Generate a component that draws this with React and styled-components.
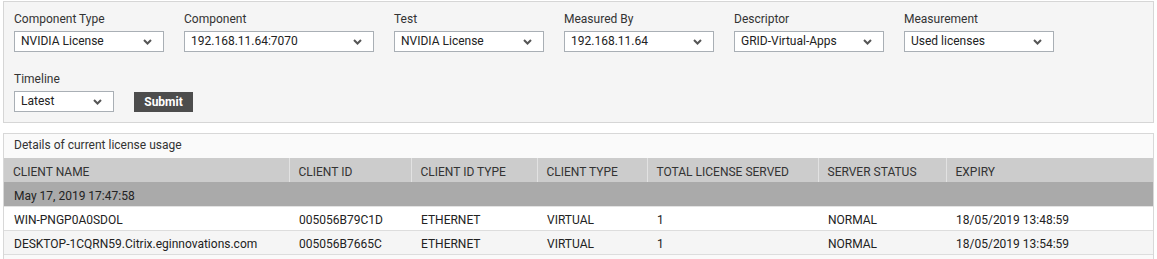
import React from "react";
import styled, { createGlobalStyle } from "styled-components";

const filters = [
  { label: "Component Type", value: "NVIDIA License", width: 150 },
  { label: "Component", value: "192.168.11.64:7070", width: 190 },
  { label: "Test", value: "NVIDIA License", width: 150 },
  { label: "Measured By", value: "192.168.11.64", width: 150 },
  { label: "Descriptor", value: "GRID-Virtual-Apps", width: 150 },
  { label: "Measurement", value: "Used licenses", width: 150 },
];

const columns = [
  { title: "Client Name", width: 285 },
  { title: "Client ID", width: 122 },
  { title: "Client ID Type", width: 126 },
  { title: "Client Type", width: 110 },
  { title: "Total License Served", width: 171 },
  { title: "Server Status", width: 128 },
  { title: "Expiry" },
];

const rows = [
  ["WIN-PNGP0A0SDOL", "005056B79C1D", "ETHERNET", "VIRTUAL", "1", "NORMAL", "18/05/2019 13:48:59"],
  ["DESKTOP-1CQRN59.Citrix.eginnovations.com", "005056B7665C", "ETHERNET", "VIRTUAL", "1", "NORMAL", "18/05/2019 13:54:59"],
];

const Chevron = () => (
  <svg width="9" height="6" viewBox="0 0 9 6">
    <polyline points="1,1 4.5,4.5 8,1" fill="none" stroke="#555" strokeWidth="2" />
  </svg>
);

const Dropdown = ({ value, width }) => (
  <Select $width={width}>
    <span>{value}</span>
    <Chevron />
  </Select>
);

const App = () => {
  return (
    <Page>
      <GlobalStyle />
      <FilterPanel>
        <FilterRow>
          {filters.map((f) => (
            <Field key={f.label}>
              <Label>{f.label}</Label>
              <Dropdown value={f.value} width={f.width} />
            </Field>
          ))}
        </FilterRow>
        <FilterRow>
          <Field>
            <Label>Timeline</Label>
            <Dropdown value="Latest" width={100} />
          </Field>
          <SubmitButton>Submit</SubmitButton>
        </FilterRow>
      </FilterPanel>

      <TableBox>
        <TableTitle>Details of current license usage</TableTitle>
        <Table>
          <colgroup>
            {columns.map((c) => (
              <col key={c.title} style={c.width ? { width: c.width } : undefined} />
            ))}
          </colgroup>
          <thead>
            <tr>
              {columns.map((c) => (
                <HeadCell key={c.title}>{c.title}</HeadCell>
              ))}
            </tr>
          </thead>
          <tbody>
            <tr>
              <GroupCell colSpan={columns.length}>May 17, 2019 17:47:58</GroupCell>
            </tr>
            {rows.map((r, i) => (
              <DataRow key={i} $striped={i % 2 === 1}>
                {r.map((v, j) => (
                  <Cell key={j}>{v}</Cell>
                ))}
              </DataRow>
            ))}
          </tbody>
        </Table>
      </TableBox>
    </Page>
  );
};

const GlobalStyle = createGlobalStyle`
  body {
    margin: 0;
    background: #ffffff;
    font-family: Roboto, "Liberation Sans", sans-serif;
    font-size: 12px;
    color: #333;
  }
`;

const Page = styled.div`
  padding: 1px 3px 0 3px;
`;

const FilterPanel = styled.div`
  background: #f5f5f5;
  border: 1px solid #d6d6d6;
  padding: 9px 10px 10px 10px;
  display: flex;
  flex-direction: column;
  gap: 19px;
`;

const FilterRow = styled.div`
  display: flex;
  align-items: flex-end;
  gap: 20px;
`;

const Field = styled.div`
  display: flex;
  flex-direction: column;
  gap: 4px;
`;

const Label = styled.div`
  line-height: 16px;
  color: #333;
`;

const Select = styled.div`
  box-sizing: border-box;
  width: ${(p) => p.$width}px;
  height: 21px;
  background: #fff;
  border: 1px solid #a9afb5;
  display: flex;
  align-items: center;
  justify-content: space-between;
  padding: 0 11px 0 6px;
  color: #222;
  line-height: 19px;
`;

const SubmitButton = styled.div`
  box-sizing: border-box;
  width: 59px;
  height: 20px;
  background: #4d4d4d;
  color: #fff;
  font-weight: bold;
  display: flex;
  align-items: center;
  justify-content: center;
`;

const TableBox = styled.div`
  margin-top: 10px;
  border: 1px solid #d8d8d8;
  background: #fafafa;
  height: 130px;
`;

const TableTitle = styled.div`
  height: 24px;
  line-height: 23px;
  padding-left: 10px;
  color: #333;
`;

const Table = styled.table`
  width: 100%;
  border-collapse: collapse;
  table-layout: fixed;
`;

const HeadCell = styled.th`
  padding: 6px 0 2px 9px;
  line-height: 16px;
  vertical-align: top;
  background: #cccccc;
  border-left: 1px solid #e2e2e2;
  text-align: left;
  font-weight: normal;
  text-transform: uppercase;
  color: #333;
  white-space: nowrap;

  &:first-child {
    border-left: none;
  }
`;

const GroupCell = styled.td`
  padding: 6px 0 2px 10px;
  line-height: 16px;
  vertical-align: top;
  background: #aaaaaa;
  color: #222;
`;

const DataRow = styled.tr`
  background: ${(p) => (p.$striped ? "#f5f5f5" : "#ffffff")};
  border-top: 1px solid #e3e3e3;
  border-bottom: 1px solid #dddddd;
`;

const Cell = styled.td`
  padding: 5px 0 2px 10px;
  line-height: 16px;
  vertical-align: top;
  color: #222;
  white-space: nowrap;
`;

export default App;
